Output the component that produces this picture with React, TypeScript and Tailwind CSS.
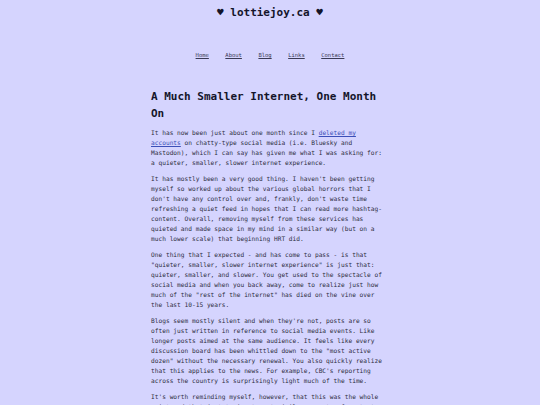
import React from "react";

const paras: React.ReactNode[] = [
  <>
    It has now been just about one month since I{" "}
    <a href="#" className="text-[#3b4fb8] underline">deleted my accounts</a> on chatty-type social media (i.e. Bluesky and
    Mastodon), which I can say has given me what I was asking for: a quieter, smaller, slower internet experience.
  </>,
  <>
    It has mostly been a very good thing. I haven't been getting myself so worked up about the various global horrors
    that I don't have any control over and, frankly, don't waste time refreshing a quiet feed in hopes that I can read
    more hashtag-content. Overall, removing myself from these services has quieted and made space in my mind in a
    similar way (but on a much lower scale) that beginning HRT did.
  </>,
  <>
    One thing that I expected - and has come to pass - is that "quieter, smaller, slower internet experience" is just
    that: quieter, smaller, and slower. You get used to the spectacle of social media and when you back away, come to
    realize just how much of the "rest of the internet" has died on the vine over the last 10-15 years.
  </>,
  <>
    Blogs seem mostly silent and when they're not, posts are so often just written in reference to social media
    events. Like longer posts aimed at the same audience. It feels like every discussion board has been whittled down
    to the "most active dozen" without the necessary renewal. You also quickly realize that this applies to the news.
    For example, CBC's reporting across the country is surprisingly light much of the time.
  </>,
  <>
    It's worth reminding myself, however, that this was the whole point and that just trying to get similar amounts of
    content, but from more than one website is just another on-ramp to doomscrolling.
  </>,
];

export default function App() {
  return (
    <div
      className="w-[540px] h-[405px] overflow-hidden bg-[#d5d4fe] text-[#2e2e3e]"
      style={{ fontFamily: '"DejaVu Sans Mono", "Liberation Mono", monospace' }}
    >
      <header className="text-center font-bold text-[11px] leading-[26px] text-[#14142a]">♥ lottiejoy.ca ♥</header>
      <nav className="mt-[24px] flex justify-center gap-[16.5px] text-[5.5px] leading-[10px] text-[#3a3a55]">
        <a href="#" className="underline">Home</a>
        <a href="#" className="underline">About</a>
        <a href="#" className="underline">Blog</a>
        <a href="#" className="underline">Links</a>
        <a href="#" className="underline">Contact</a>
      </nav>
      <main className="mx-auto mt-[27.5px] w-[238px]">
        <h1 className="font-bold text-[11px] leading-[17px] text-[#14142a]">A Much Smaller Internet, One Month On</h1>
        <div className="mt-[6.5px] flex flex-col gap-[6px] text-[6.2px] leading-[10px]">
          {paras.map((p, i) => (
            <p key={i}>{p}</p>
          ))}
        </div>
      </main>
    </div>
  );
}
